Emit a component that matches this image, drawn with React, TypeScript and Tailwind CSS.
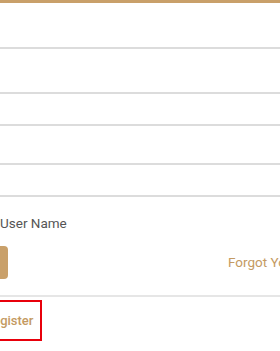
export default function App() {
  return (
    <div className="relative h-[351px] w-[280px] overflow-hidden bg-white font-['Roboto',sans-serif]">
      <div className="h-[3px] bg-[#c9a06a]" />
      <div className="h-[44px]" />
      <div className="h-[2px] bg-[#dcdcdc]" />
      <div className="h-[43px]" />
      <div className="h-[2px] bg-[#dcdcdc]" />
      <div className="h-[30px]" />
      <div className="h-[2px] bg-[#dcdcdc]" />
      <div className="h-[37px]" />
      <div className="h-[2px] bg-[#dcdcdc]" />
      <div className="h-[30px]" />
      <div className="h-[2px] bg-[#dcdcdc]" />
      <div className="mt-[17px] flex h-[18px] items-center whitespace-nowrap text-[13.5px] text-[#555]">
        <span>User Name</span>
      </div>
      <div className="mt-[14px] flex h-[33px] items-center justify-between">
        <button className="-ml-[92px] h-[33px] w-[100px] shrink-0 rounded-sm bg-[#c9a06a] text-white" />
        <span className="w-[52px] shrink-0 overflow-visible whitespace-nowrap text-[13.5px] text-[#c49a62]">
          Forgot Your Password?
        </span>
      </div>
      <div className="mt-[16px] h-[2px] bg-[#e6e6e6]" />
      <div className="mt-[3px] flex h-[41px] w-[42px] items-center overflow-hidden border-2 border-l-0 border-[#e8000b]">
        <span className="-ml-[15px] whitespace-nowrap text-[13px] font-medium text-[#c49a62]">Register</span>
      </div>
    </div>
  );
}
